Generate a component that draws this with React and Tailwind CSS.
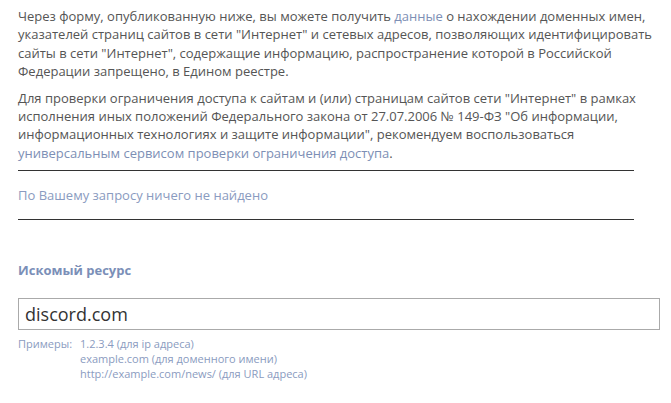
import React from 'react';

const linkCls = 'text-[#7d8fb5] no-underline';

export default function App() {
    return (
        <div className="w-[671px] h-[403px] bg-white overflow-hidden font-['Open_Sans',sans-serif] text-[#555]">
            <div className="pl-[18px] pt-[7px] w-[660px]">
                <div className="w-[640px] text-[13px] leading-[18.4px]">
                    <p>
                        Через форму, опубликованную ниже, вы можете получить{' '}
                        <a href="#" className={linkCls}>данные</a> о нахождении доменных имен,
                        указателей страниц сайтов в сети "Интернет" и сетевых адресов, позволяющих идентифицировать
                        сайты в сети "Интернет", содержащие информацию, распространение которой в Российской
                        Федерации запрещено, в Едином реестре.
                    </p>
                    <p className="mt-[8px]">
                        Для проверки ограничения доступа к сайтам и (или) страницам сайтов сети "Интернет" в рамках
                        исполнения иных положений Федерального закона от 27.07.2006 № 149-ФЗ "Об информации,
                        информационных технологиях и защите информации", рекомендуем воспользоваться{' '}
                        <a href="#" className={linkCls}>универсальным сервисом проверки ограничения доступа</a>.
                    </p>
                </div>

                {/* result block */}
                <div className="w-[616px] mt-[8px] border-t border-b border-[#333] py-[15px]">
                    <div className="text-[13px] leading-[18px] text-[#8a9bc0]">По Вашему запросу ничего не найдено</div>
                </div>

                {/* search form */}
                <div className="mt-[41px]">
                    <label className="block text-[13px] font-bold text-[#7b8fb8] leading-[18px]">Искомый ресурс</label>
                    <div className="mt-[19px] w-[642px] h-[32px] border border-[#aaa] flex items-center px-[6px]">
                        <span className="text-[18px] text-[#333] leading-none">discord.com</span>
                    </div>
                    <div className="mt-[6px] flex text-[11px] leading-[15px] text-[#8a9bc0]">
                        <span className="w-[62px]">Примеры:</span>
                        <div className="flex flex-col">
                            <span>1.2.3.4 (для ip адреса)</span>
                            <span>example.com (для доменного имени)</span>
                            <span>http://example.com/news/ (для URL адреса)</span>
                        </div>
                    </div>
                </div>
            </div>
        </div>
    );
}
